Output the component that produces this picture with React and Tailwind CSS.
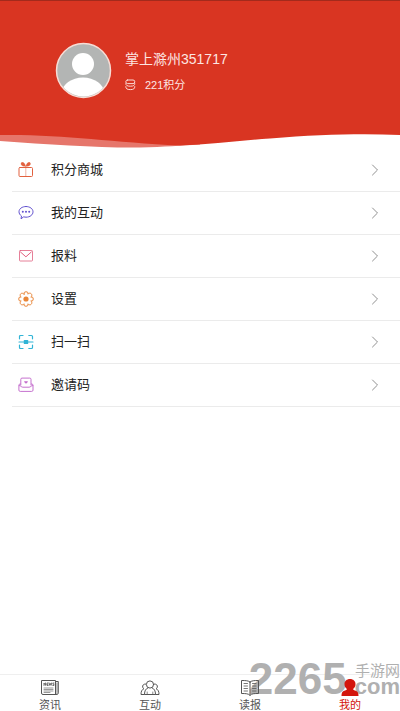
const strokeProps = {
  fill: "none",
  stroke: "currentColor",
  strokeLinecap: "round",
  strokeLinejoin: "round",
};

function GiftIcon() {
  return (
    <svg viewBox="0 0 16 16" className="size-4 text-[#e2613f]" {...strokeProps} aria-hidden="true">
      <rect x="1" y="5.500" width="13.500" height="9" rx="1" />
      <path d="M7.800 6v8" strokeWidth="0.8" opacity="0.6" />
      <path d="M7.600 4.300C5.500 4.500 3.200 3.800 3 2 2.900.4 4.200 0 5.300.6 6.500 1.200 7.200 2.500 7.600 4.300zM7.900 4.300C10 4.500 12.300 3.800 12.500 2c.1-1.600-1.200-2-2.300-1.400C9 1.200 8.300 2.500 7.900 4.300z" fill="currentColor" strokeWidth="0.3" />
    </svg>
  );
}

function ChatIcon() {
  return (
    <svg viewBox="0 0 16 16" className="size-4 text-[#6353cf]" {...strokeProps} aria-hidden="true">
      <path d="M8 1.500c4 0 7 2.300 7 5.300s-3 5.400-7 5.400c-.9 0-1.700-.1-2.400-.3L3 13.800l.5-2.800C2 10 1 8.500 1 6.800c0-3 3-5.300 7-5.300z" />
      <g fill="currentColor" stroke="none">
        <circle cx="4.800" cy="6.800" r="1" />
        <circle cx="8" cy="6.800" r="1" />
        <circle cx="11.200" cy="6.800" r="1" />
      </g>
    </svg>
  );
}

function MailIcon() {
  return (
    <svg viewBox="0 0 16 16" className="size-4 text-[#e0607f]" {...strokeProps} aria-hidden="true">
      <rect x="1.500" y="2.500" width="13" height="10.500" rx="0.8" strokeWidth="0.8" />
      <path d="M2.500 4l5.400 4.800L13.300 4" />
    </svg>
  );
}

function GearIcon() {
  return (
    <svg viewBox="0 0 16 16" className="size-4 text-[#e98638]" {...strokeProps} aria-hidden="true">
      <path d="M6 3.200A2.050 2.050 0 1 1 10 3.200A2.050 2.050 0 1 1 12.800 6A2.050 2.050 0 1 1 12.800 10A2.050 2.050 0 1 1 10 12.800A2.050 2.050 0 1 1 6 12.800A2.050 2.050 0 1 1 3.200 10A2.050 2.050 0 1 1 3.200 6A2.050 2.050 0 1 1 6 3.200z" />
      <circle cx="8" cy="8" r="2.600" fill="currentColor" stroke="none" />
    </svg>
  );
}

function ScanIcon() {
  return (
    <svg viewBox="0 0 16 16" className="size-4 text-[#31b4d6]" {...strokeProps} aria-hidden="true">
      <path d="M1.500 4.800V2.500q0-1 1-1H5M10.800 1.500h2.700q1 0 1 1v2.300M14.500 11v2.500q0 1-1 1h-2.700M5 14.500H2.500q-1 0-1-1V11M1 8h14" strokeWidth="1.200" />
      <rect x="5.800" y="6" width="4.400" height="4" rx="0.5" fill="currentColor" stroke="none" />
    </svg>
  );
}

function InviteIcon() {
  return (
    <svg viewBox="0 0 16 16" className="size-4 text-[#c571ce]" {...strokeProps} aria-hidden="true">
      <path d="M2.800 8V2.300q0-1.200 1.200-1.200h7.800q1.200 0 1.200 1.200V8" />
      <path d="M2.500 7h-.6q-1 .2-1 1.200v4.900q0 1.300 1.300 1.300h11.500q1.300 0 1.300-1.300V8.200q0-1-1-1.200h-.6M1.200 8.500c1.800 0 2 1.700 3.600 1.700h6.300c1.600 0 1.800-1.700 3.700-1.700" />
      <path d="M8 6.800L6.400 5.200c-.5-1 .9-1.700 1.600-.6.700-1.100 2.100-.4 1.600.6z" fill="currentColor" stroke="none" />
    </svg>
  );
}

function ChevronIcon() {
  return (
    <svg viewBox="0 0 8 12" className="h-3 w-2 text-[#909090]" {...strokeProps} aria-hidden="true">
      <path d="M1.500 1l5 5-5 5" />
    </svg>
  );
}

function CoinsIcon() {
  return (
    <svg viewBox="0 0 12 12" className="size-3 text-[#fbd9d4]" {...strokeProps} aria-hidden="true">
      <rect x="0.800" y="1" width="9" height="3.600" rx="1.800" />
      <path d="M.8 4.600c0 1.800 1.200 2.600 4.500 2.600s4.500-.8 4.500-2.600M.8 7.600c0 2.200 1.200 3 4.500 3s4.500-.8 4.500-3" />
    </svg>
  );
}

function NewsIcon() {
  return (
    <svg viewBox="0 0 20 18" className="h-[18px] w-5 shrink-0" {...strokeProps} aria-hidden="true">
      <path d="M15.500 14.500V1.500h-14v12.500q0 1.500 1.500 1.500h13.500q1.800 0 1.800-1.600V2.500h-2.800M15.500 14q0 1.500 1.200 1.500" />
      <path d="M17 4v9.500" strokeWidth="0.7" />
      <path d="M4 6.500V4l1.500 2.400V4M8.200 4H7v2.500h1.200M7 5.300h1M9.200 4l.5 2.400.7-2 .7 2 .5-2.400M14 4h-1.100v1.200H14v1.300h-1.200" strokeWidth="0.8" />
      <path d="M4 9h9M4 10.500h9M4 12h9M4 13.500h6" strokeWidth="0.6" />
    </svg>
  );
}

function PeopleIcon() {
  return (
    <svg viewBox="0 0 20 18" className="h-[18px] w-5 shrink-0" {...strokeProps} aria-hidden="true">
      <circle cx="10" cy="5.500" r="3.600" />
      <path d="M8 8.800c-2.300 1-3.500 3-3.500 6.700h11c0-3.700-1.200-5.700-3.500-6.700" />
      <path d="M5.700 5C3.600 4.800 2.200 6.400 2.700 8.200c.2.800.7 1.300 1.200 1.600-2 .8-2.900 2.500-2.900 5.700h3.300M14.300 5c2.100-.2 3.500 1.400 3 3.200-.2.800-.7 1.300-1.200 1.600 2 .8 2.900 2.500 2.900 5.700h-3.300" />
      <path d="M7.200 13v2.300M12.800 13v2.300" strokeWidth="0.7" />
    </svg>
  );
}

function BookIcon() {
  return (
    <svg viewBox="0 0 20 18" className="h-[18px] w-5 shrink-0" {...strokeProps} aria-hidden="true">
      <path d="M10 3C8.500 1.600 5.500 1.500 1.500 1.500v13c4 0 7 0 8.500 2 1.500-2 4.500-2 8.500-2v-13c-4 0-7 .1-8.500 1.500zM10 3v13" />
      <path d="M4 4.500h3.500M4 7h3.500M4 9.500h3.500M4 12h3.500M12.500 4.500H16M12.500 7H16M12.500 9.500H16M12.500 12H16" strokeWidth="0.8" />
    </svg>
  );
}

function UserIcon() {
  return (
    <svg viewBox="0 0 20 18" className="h-[18px] w-5 shrink-0" fill="currentColor" aria-hidden="true">
      <path d="M10 0c3.300 0 5.500 2.200 5.500 5.200 0 2-1 3.600-2.400 4.800.2 1 1.200 1.300 2.700 1.800 2 .7 2.700 2.200 2.700 5.200h-17c0-3 .7-4.500 2.700-5.200 1.500-.5 2.500-.8 2.700-1.800C5.500 8.800 4.500 7.200 4.500 5.200 4.500 2.200 6.700 0 10 0z" />
    </svg>
  );
}

const menu = [
  { label: "积分商城", Icon: GiftIcon },
  { label: "我的互动", Icon: ChatIcon },
  { label: "报料", Icon: MailIcon },
  { label: "设置", Icon: GearIcon },
  { label: "扫一扫", Icon: ScanIcon },
  { label: "邀请码", Icon: InviteIcon },
];

const tabs = [
  { label: "资讯", Icon: NewsIcon },
  { label: "互动", Icon: PeopleIcon },
  { label: "读报", Icon: BookIcon },
  { label: "我的", Icon: UserIcon, active: true },
];

function Header() {
  return (
    <header>
      <div className="flex h-32 items-center gap-3 border-t border-[#a32a1c] bg-[#d93522] pt-3 pl-[55px] text-[#fde6e2]">
        <svg viewBox="0 0 58 58" className="size-[58px]" role="img" aria-label="头像">
          <defs>
            <clipPath id="avatar">
              <circle cx="28.500" cy="28.500" r="26" />
            </clipPath>
          </defs>
          <circle cx="28.500" cy="28.500" r="27" fill="#b3b5b4" stroke="#f7ddd6" strokeWidth="1.500" />
          <g clipPath="url(#avatar)" fill="#fff">
            <circle cx="28" cy="22" r="11" />
            <ellipse cx="28" cy="50.500" rx="21" ry="15" />
          </g>
        </svg>
        <div className="flex flex-col gap-2">
          <h1 className="text-sm">掌上滁州351717</h1>
          <p className="flex items-center gap-2 text-[11px] leading-4">
            <CoinsIcon />
            221积分
          </p>
        </div>
      </div>
      <svg viewBox="0 0 400 21" preserveAspectRatio="none" className="block h-[21px] w-full" aria-hidden="true">
        <path d="M0 0V13C50 16.500 100 20 140 19.500C165 19 180 17.500 200 16.500V0z" fill="#e6766b" />
        <path d="M0 0V7C60 6 110 14 180 17.500C210 16.500 240 12.500 270 10.500C320 6.500 360 5.500 400 7V0z" fill="#d93522" />
      </svg>
    </header>
  );
}

export default function App() {
  return (
    <div className="flex min-h-screen flex-col bg-white font-['Liberation_Sans','Noto_Sans_CJK_SC',sans-serif]">
      <Header />
      <main className="flex-1">
        <ul className="pl-3">
          {menu.map(({ label, Icon }) => (
            <li key={label} className="border-b border-[#ebebeb]">
              <button type="button" className="flex h-[42px] w-full items-center pr-[21px] pl-1.5 text-[13px] text-[#222]">
                <Icon />
                <span className="flex-1 pl-[17px] text-left">{label}</span>
                <ChevronIcon />
              </button>
            </li>
          ))}
        </ul>
      </main>
      <footer className="relative border-t border-[#efefef]">
        <div className="pointer-events-none absolute right-0 bottom-3.5 flex items-center gap-0.5 text-[#b0b0b0]">
          <span className="text-[44px] leading-9 font-bold">2265</span>
          <div className="flex flex-col items-end">
            <span className="text-[15px] leading-4">手游网</span>
            <span className="text-[22px] leading-4 font-bold">.com</span>
          </div>
        </div>
        <nav className="relative grid grid-cols-4">
          {tabs.map(({ label, Icon, active }) => (
            <button
              key={label}
              type="button"
              aria-current={active ? "page" : undefined}
              className={`flex h-9 flex-col items-center gap-0.5 pt-1 text-[11px] leading-3 ${active ? "text-[#d3150c]" : "text-[#555]"}`}
            >
              <Icon />
              <span>{label}</span>
            </button>
          ))}
        </nav>
      </footer>
    </div>
  );
}
